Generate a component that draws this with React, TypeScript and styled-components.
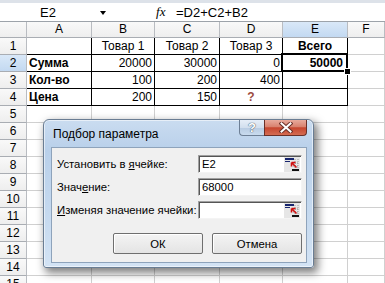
import React from "react";
import styled, { createGlobalStyle, css } from "styled-components";

type Align = "left" | "center" | "right";

interface CellData {
  text: string;
  align?: Align;
  bold?: boolean;
  color?: string;
}

const COLS = ["A", "B", "C", "D", "E", "F"];
const ROW_COUNT = 15;

const left = (text: string): CellData => ({ text, align: "left", bold: true });
const num = (text: string): CellData => ({ text, align: "right" });
const head = (text: string, bold = false): CellData => ({ text, align: "center", bold });

const sheetData: CellData[][] = [
  [head(""), head("Товар 1"), head("Товар 2"), head("Товар 3"), head("Всего", true)],
  [left("Сумма"), num("20000"), num("30000"), num("0"), { text: "50000", align: "right", bold: true }],
  [left("Кол-во"), num("100"), num("200"), num("400"), head("")],
  [left("Цена"), num("200"), num("150"), { text: "?", align: "center", bold: true, color: "#9c4a40" }, head("")],
];

const RefIcon = () => (
  <svg width="16" height="15" viewBox="0 0 16 15">
    <rect width="16" height="15" fill="#e6e6e6" />
    <rect x="1" y="1" width="9" height="2" fill="#17256e" />
    <rect x="1" y="4" width="5" height="1" fill="#17256e" />
    <path d="M11 2v10M14 2v10M9 6h6M9 9h6" stroke="#9a9a9a" strokeWidth="1" strokeDasharray="1 1" />
    <path d="M12.5 10.5L7.5 5.5M7.5 5.5v4M7.5 5.5h4" stroke="#d01010" strokeWidth="1.6" fill="none" />
    <rect x="8" y="12" width="7" height="2" fill="#111" />
  </svg>
);

const CloseGlyph = () => (
  <svg width="14" height="11" viewBox="0 0 14 11">
    <path d="M2.5 1.5l9 8M11.5 1.5l-9 8" stroke="#6a3028" strokeWidth="4" strokeLinecap="square" />
    <path d="M2.5 1.5l9 8M11.5 1.5l-9 8" stroke="#fff" strokeWidth="2" strokeLinecap="square" />
  </svg>
);

export default function App() {
  return (
    <>
      <GlobalStyle />
      <Sheet>
        <FormulaBar>
          <NameBox>E2</NameBox>
          <DropArrow />
          <FxLabel>
            <i>f</i>x
          </FxLabel>
          <FormulaText>=D2+C2+B2</FormulaText>
        </FormulaBar>

        <Grid>
          <Corner />
          {COLS.map((c) => (
            <ColHead key={c} $active={c === "E"}>
              {c}
            </ColHead>
          ))}
          {Array.from({ length: ROW_COUNT }, (_, r) => (
            <React.Fragment key={r}>
              <RowHead $active={r === 1}>{r + 1}</RowHead>
              {COLS.map((c, ci) => {
                const d = sheetData[r]?.[ci];
                return (
                  <Cell
                    key={c}
                    $boxed={r < 4 && ci < 5}
                    $selected={r === 1 && ci === 4}
                    $align={d?.align}
                    $bold={d?.bold}
                    $color={d?.color}
                  >
                    {d?.text}
                  </Cell>
                );
              })}
            </React.Fragment>
          ))}
        </Grid>

        <Dialog>
          <TitleBar>
            <Title>Подбор параметра</Title>
            <HelpButton>?</HelpButton>
            <CloseButton>
              <CloseGlyph />
            </CloseButton>
          </TitleBar>
          <Body>
            <Field>
              <Label>
                Установить в <u>я</u>чейке:
              </Label>
              <Input>
                <InputText>E2</InputText>
                <RefIcon />
              </Input>
            </Field>
            <Field>
              <Label>
                Знач<u>е</u>ние:
              </Label>
              <Input>
                <InputText>68000</InputText>
              </Input>
            </Field>
            <Field>
              <Label>
                <u>И</u>зменяя значение ячейки:
              </Label>
              <Input>
                <InputText />
                <RefIcon />
              </Input>
            </Field>
            <Buttons>
              <Button>ОК</Button>
              <Button>Отмена</Button>
            </Buttons>
          </Body>
        </Dialog>
      </Sheet>
    </>
  );
}

const GlobalStyle = createGlobalStyle`
  html, body {
    margin: 0;
    padding: 0;
    background: #fff;
  }
  body {
    font-family: "Liberation Sans", Arial, sans-serif;
    color: #000;
  }
`;

const Sheet = styled.div`
  position: relative;
  width: 385px;
  height: 283px;
  overflow: hidden;
  background: #fff;
`;

const FormulaBar = styled.div`
  display: flex;
  align-items: center;
  box-sizing: border-box;
  height: 22px;
  border-top: 3px solid #dde2e9;
  border-bottom: 1px solid #9da3aa;
  font-size: 13px;
`;

const NameBox = styled.div`
  width: 96px;
  text-align: center;
`;

const DropArrow = styled.div`
  width: 0;
  height: 0;
  margin: 1px 5px 0 4px;
  border-left: 3.5px solid transparent;
  border-right: 3.5px solid transparent;
  border-top: 4px solid #000;
`;

const FxLabel = styled.div`
  margin-left: 45px;
  width: 18px;
  font-family: "Liberation Serif", "Times New Roman", serif;
  font-size: 13px;
  font-style: italic;
`;

const FormulaText = styled.div`
  padding-left: 2px;
`;

const Grid = styled.div`
  display: grid;
  grid-template-columns: 27px 65px 63px 65px 63px 65px 1fr;
  grid-template-rows: 16px;
  grid-auto-rows: 17px;
  font-size: 12px;
`;

const headerBase = css`
  box-sizing: border-box;
  background: linear-gradient(180deg, #f9f9f9, #eeeeee);
  border-right: 1px solid #b9bcc1;
  border-bottom: 1px solid #a9adb3;
  text-align: center;
  line-height: 16px;
`;

const Corner = styled.div`
  ${headerBase};
`;

const ColHead = styled.div<{ $active?: boolean }>`
  ${headerBase};
  line-height: 15px;
  ${(p) =>
    p.$active &&
    css`
      background: linear-gradient(180deg, #d9e8f8, #c3d9f1);
    `}
`;

const RowHead = styled.div<{ $active?: boolean }>`
  ${headerBase};
  ${(p) =>
    p.$active &&
    css`
      background: linear-gradient(180deg, #d9e8f8, #c3d9f1);
    `}
`;

const Cell = styled.div<{
  $align?: Align;
  $bold?: boolean;
  $color?: string;
  $boxed?: boolean;
  $selected?: boolean;
}>`
  position: relative;
  box-sizing: border-box;
  padding: 0 2px;
  border-right: 1px solid ${(p) => (p.$boxed ? "#000" : "#d0d0d0")};
  border-bottom: 1px solid ${(p) => (p.$boxed ? "#000" : "#d0d0d0")};
  line-height: 16px;
  text-align: ${(p) => p.$align ?? "left"};
  font-weight: ${(p) => (p.$bold ? 700 : 400)};
  color: ${(p) => p.$color ?? "#000"};
  white-space: nowrap;
  overflow: hidden;

  ${(p) =>
    p.$selected &&
    css`
      overflow: visible;
      z-index: 2;
      padding-right: 4px;
      &::after {
        content: "";
        position: absolute;
        top: -2px;
        left: -2px;
        right: -1px;
        bottom: -1px;
        border: 2px solid #000;
        pointer-events: none;
      }
      &::before {
        content: "";
        position: absolute;
        right: -4px;
        bottom: -4px;
        width: 5px;
        height: 5px;
        background: #000;
        border: 1px solid #fff;
        z-index: 3;
      }
    `}
`;

const Dialog = styled.div`
  position: absolute;
  left: 43px;
  top: 119px;
  width: 271px;
  height: 149px;
  box-sizing: border-box;
  display: flex;
  flex-direction: column;
  padding: 0 6px 4px 7px;
  border: 1px solid #6a7d93;
  border-radius: 6px 6px 3px 3px;
  background: linear-gradient(180deg, #cadcf0 0%, #b9d0ea 20%, #c4d8ee 60%, #d3e3f4 100%);
  box-shadow: 3px 4px 9px 1px rgba(0, 0, 0, 0.5), inset 0 0 0 1px rgba(255, 255, 255, 0.55);
  z-index: 5;
`;

const TitleBar = styled.div`
  display: flex;
  align-items: flex-start;
  height: 27px;
`;

const Title = styled.div`
  flex: 1;
  padding-left: 2px;
  line-height: 28px;
  font-size: 12px;
  color: #000;
`;

const TitleButton = styled.div`
  box-sizing: border-box;
  height: 16px;
  display: flex;
  align-items: center;
  justify-content: center;
`;

const HelpButton = styled(TitleButton)`
  width: 25px;
  border: 1px solid #6d7f95;
  border-top: none;
  border-right: none;
  border-radius: 0 0 0 4px;
  background: linear-gradient(180deg, #e6eef8 0%, #d2dfee 50%, #b7cbe2 51%, #c9dbee 100%);
  color: #fff;
  font-size: 13px;
  font-weight: 700;
  text-shadow: 0 0 1px #3c4b5e, 0 0 1px #3c4b5e;
`;

const CloseButton = styled(TitleButton)`
  width: 43px;
  border: 1px solid #6a3028;
  border-top: none;
  border-radius: 0 0 4px 0;
  background: linear-gradient(180deg, #e8aa9c 0%, #d8826f 45%, #c6462f 52%, #d46c52 100%);
`;

const Body = styled.div`
  flex: 1;
  display: flex;
  flex-direction: column;
  gap: 5px;
  padding: 7px 4px 8px 5px;
  background: #f0f0f0;
  border: 1px solid #8ea3bb;
  font-size: 11.3px;
`;

const Field = styled.div`
  display: grid;
  grid-template-columns: 1fr 104px;
  align-items: center;
  height: 18px;
`;

const Label = styled.div`
  white-space: nowrap;
`;

const Input = styled.div`
  box-sizing: border-box;
  height: 18px;
  display: flex;
  align-items: center;
  padding: 0 1px 0 2px;
  background: #fff;
  border: 1px solid;
  border-color: #a0a0a0 #f4f4f4 #f4f4f4 #a0a0a0;
  box-shadow: inset 1px 1px 0 #555;
`;

const InputText = styled.div`
  flex: 1;
  padding-left: 1px;
`;

const Buttons = styled.div`
  display: flex;
  justify-content: flex-end;
  gap: 9px;
  margin-top: 9px;
`;

const Button = styled.div`
  box-sizing: border-box;
  width: 90px;
  height: 21px;
  display: flex;
  align-items: center;
  justify-content: center;
  background: linear-gradient(180deg, #f4f4f4, #e4e4e4);
  border: 1px solid #6f6f6f;
  border-radius: 2px;
  box-shadow: inset 1px 1px 0 #fff;
`;
